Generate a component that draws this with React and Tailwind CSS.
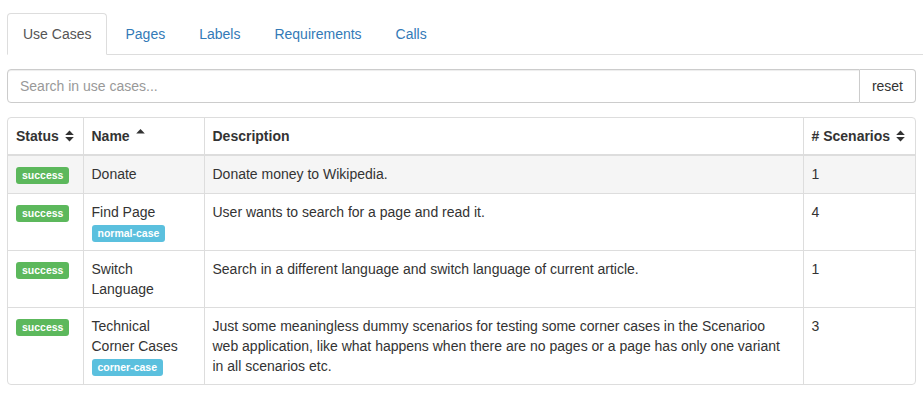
import React from "react";

const rows = [
  { name: "Donate", desc: "Donate money to Wikipedia.", count: 1 },
  { name: "Find Page", label: "normal-case", desc: "User wants to search for a page and read it.", count: 4 },
  { name: "Switch Language", desc: "Search in a different language and switch language of current article.", count: 1 },
  {
    name: "Technical Corner Cases",
    label: "corner-case",
    desc: "Just some meaningless dummy scenarios for testing some corner cases in the Scenarioo web application, like what happens when there are no pages or a page has only one variant in all scenarios etc.",
    count: 3,
  },
];

function SortBoth() {
  return (
    <svg width="9" height="12" viewBox="0 0 9 12" className="inline-block ml-[6px] -mt-[2px] align-middle">
      <path d="M4.5 0.5 L8.8 5 L0.2 5 Z" fill="#333" />
      <path d="M0.2 7 L8.8 7 L4.5 11.5 Z" fill="#333" />
    </svg>
  );
}

function SortUp() {
  return (
    <svg width="9" height="12" viewBox="0 0 9 12" className="inline-block ml-[6px] -mt-[6px] align-middle">
      <path d="M4.5 1 L8.8 5.5 L0.2 5.5 Z" fill="#333" />
    </svg>
  );
}

function Label({ color, children }) {
  return (
    <span
      className={`inline rounded-[3px] px-[6px] pt-[2px] pb-[3px] text-[10.5px] font-bold leading-none text-white ${color}`}
    >
      {children}
    </span>
  );
}

const tabs = ["Use Cases", "Pages", "Labels", "Requirements", "Calls"];

export default function App() {
  return (
    <div
      className="bg-white text-[14px] leading-[20px] text-[#333] pt-[13px] pl-[7px]"
      style={{ fontFamily: '"Liberation Sans", Arial, sans-serif' }}
    >
      <ul className="flex border-b border-[#ddd]">
        {tabs.map((t, i) => (
          <li key={t} className="mr-[2px] -mb-px">
            {i === 0 ? (
              <span className="block rounded-t-[4px] border border-[#ddd] border-b-white bg-white px-[15px] py-[10px] text-[#555]">
                {t}
              </span>
            ) : (
              <span className="block border border-transparent px-[15px] py-[10px] text-[#337ab7]">{t}</span>
            )}
          </li>
        ))}
      </ul>

      <div className="pr-[7px]">
        <div className="mt-[14px] flex h-[34px]">
          <div className="flex flex-1 items-center rounded-l-[4px] border border-[#ccc] px-[12px] text-[#999] shadow-[inset_0_1px_1px_rgba(0,0,0,0.075)]">
            Search in use cases...
          </div>
          <div className="flex items-center rounded-r-[4px] border border-l-0 border-[#ccc] px-[12px] text-[#333]">
            reset
          </div>
        </div>

        <div className="mt-[14px] overflow-hidden rounded-[4px] border border-[#ddd]">
          <table className="w-full table-fixed border-collapse">
            <colgroup>
              <col className="w-[75px]" />
              <col className="w-[121px]" />
              <col />
              <col className="w-[112px]" />
            </colgroup>
            <thead>
              <tr className="border-b-2 border-[#ddd]">
                <th className="px-[8px] py-[8px] text-left font-bold">
                  Status
                  <SortBoth />
                </th>
                <th className="border-l border-[#ddd] px-[8px] py-[8px] text-left font-bold">
                  Name
                  <SortUp />
                </th>
                <th className="border-l border-[#ddd] px-[8px] py-[8px] text-left font-bold">Description</th>
                <th className="border-l border-[#ddd] px-[8px] py-[8px] text-left font-bold">
                  # Scenarios
                  <SortBoth />
                </th>
              </tr>
            </thead>
            <tbody>
              {rows.map((r, i) => {
                const pad = i === 0 ? "px-[8px] pt-[8px] pb-[9px]" : "px-[8px] py-[8px]";
                return (
                  <tr key={r.name} className={`align-top ${i > 0 ? "border-t border-[#ddd]" : "bg-[#f5f5f5]"}`}>
                    <td className={pad}>
                      <Label color="bg-[#5cb85c]">success</Label>
                    </td>
                    <td className={`border-l border-[#ddd] ${pad}`}>
                      <div>{r.name}</div>
                      {r.label && (
                        <div>
                          <Label color="bg-[#5bc0de]">{r.label}</Label>
                        </div>
                      )}
                    </td>
                    <td className={`border-l border-[#ddd] ${pad}`}>{r.desc}</td>
                    <td className={`border-l border-[#ddd] ${pad}`}>{r.count}</td>
                  </tr>
                );
              })}
            </tbody>
          </table>
        </div>
      </div>
    </div>
  );
}
